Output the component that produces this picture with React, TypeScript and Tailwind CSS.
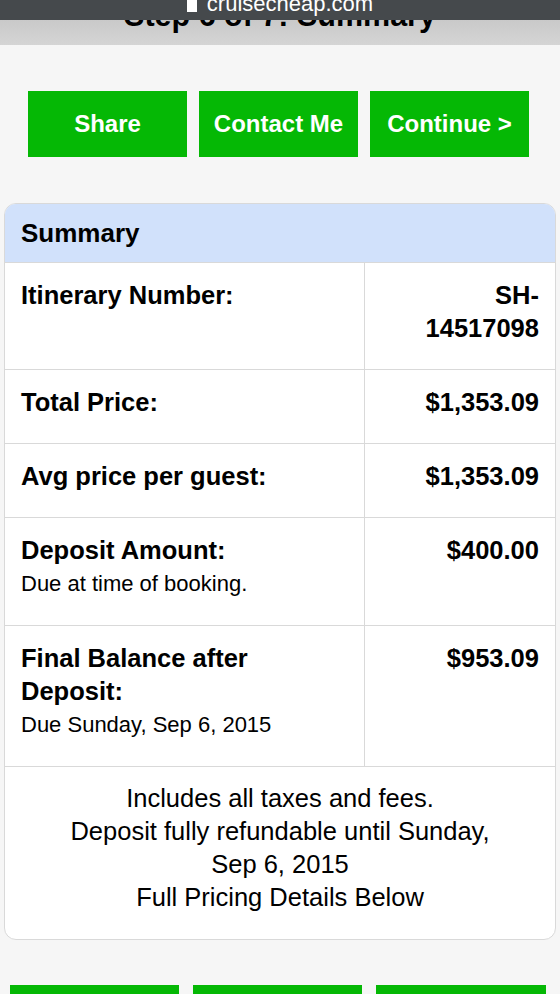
const rows = [
  { label: "Itinerary Number:", value: ["SH-", "14517098"] },
  { label: "Total Price:", value: ["$1,353.09"] },
  { label: "Avg price per guest:", value: ["$1,353.09"] },
  { label: "Deposit Amount:", value: ["$400.00"], note: "Due at time of booking." },
  { label: "Final Balance after Deposit:", value: ["$953.09"], note: "Due Sunday, Sep 6, 2015" },
]

export default function App() {
  return (
    <div className="min-h-screen bg-[#f6f6f6] text-black font-['Liberation_Sans',Arial,sans-serif]">
      {/* Safari address bar */}
      <div className="h-[20px] overflow-hidden bg-[#45494c] text-white">
        <div className="-mt-[7px] flex justify-center items-center gap-[10px] text-[22px] leading-[22px]">
          <span className="inline-block h-[12px] w-[10px] bg-white mt-[3px]"></span>
          <span>cruisecheap.com</span>
        </div>
      </div>

      {/* Page title bar */}
      <div className="h-[25px] overflow-hidden bg-gradient-to-b from-[#c9c9c9] to-[#d5d5d5]">
        <div className="-mt-[20px] text-center text-[30.5px] leading-[31px] font-bold">Step 6 of 7: Summary</div>
      </div>

      <div className="flex justify-center gap-[12px] mt-[46px] pr-[3px]">
        <GreenButton label="Share" />
        <GreenButton label="Contact Me" />
        <GreenButton label="Continue >" />
      </div>

      {/* Summary card */}
      <div className="mx-[4px] mt-[46px] rounded-[12px] border border-[#d9d9d9] bg-white overflow-hidden">
        <div className="bg-[#d1e1fb] h-[59px] flex items-center px-[16px] text-[26px] font-bold border-b border-[#d9d9d9]">
          Summary
        </div>
        {rows.map((row) => (
          <div key={row.label} className="grid grid-cols-[360px_1fr] border-b border-[#d9d9d9]">
            <div className="pl-[16px] pr-[8px] pt-[16px] pb-[24px] border-r border-[#d9d9d9]">
              <div className="text-[25.5px] leading-[33px] font-bold max-w-[300px]">{row.label}</div>
              {row.note && <div className="text-[22px] leading-[34px]">{row.note}</div>}
            </div>
            <div className="pr-[16px] pt-[16px] pb-[24px] text-right text-[25.5px] leading-[33px] font-bold">
              {row.value.map((v) => (
                <div key={v}>{v}</div>
              ))}
            </div>
          </div>
        ))}
        <div className="pt-[15px] pb-[25px] px-[16px] text-center text-[25.5px] leading-[33px]">
          <div>Includes all taxes and fees.</div>
          <div className="px-[30px]">Deposit fully refundable until Sunday, Sep 6, 2015</div>
          <div>Full Pricing Details Below</div>
        </div>
      </div>

      <div className="flex justify-center gap-[14px] mt-[45px] h-[60px] pr-[4px]">
        <div className="w-[169px] bg-[#05b805]"></div>
        <div className="w-[169px] bg-[#05b805]"></div>
        <div className="w-[170px] bg-[#05b805]"></div>
      </div>
    </div>
  )
}

function GreenButton({ label }: { label: string }) {
  return (
    <div className="w-[159px] h-[66px] bg-[#05b805] flex items-center justify-center text-white text-[24px] font-bold">
      {label}
    </div>
  )
}
